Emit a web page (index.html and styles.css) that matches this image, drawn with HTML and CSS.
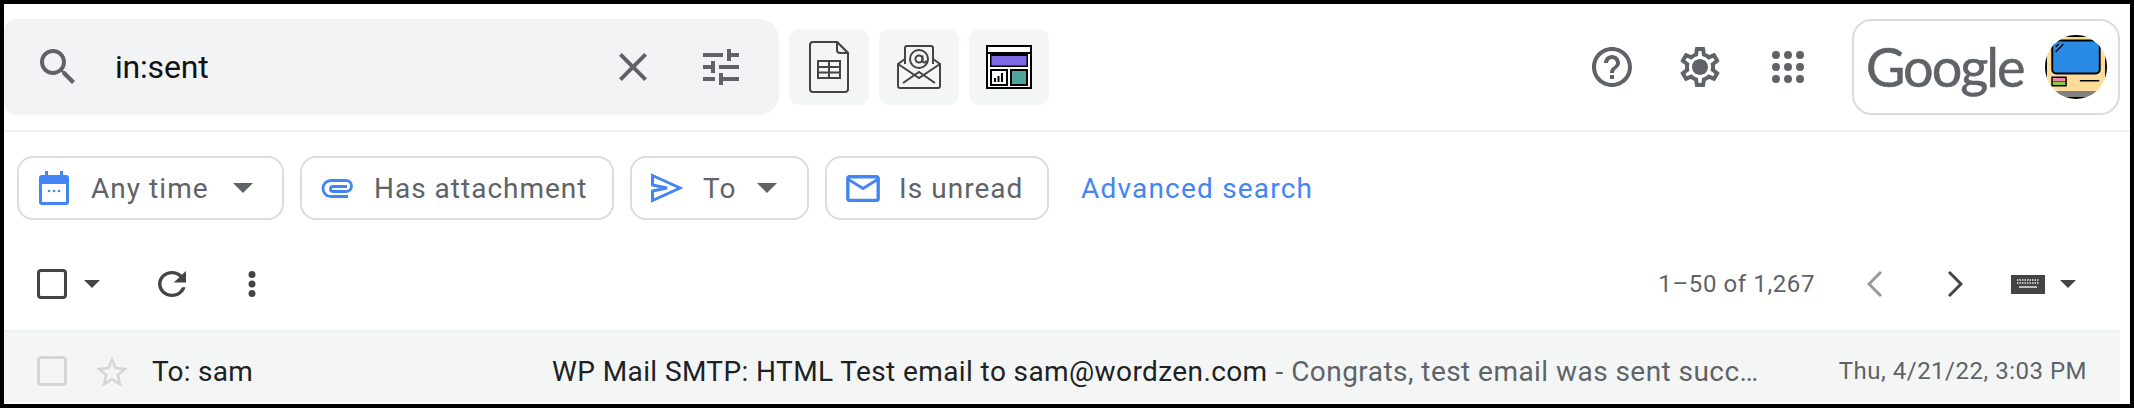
FILE: index.html
```html
<!DOCTYPE html>
<html lang="en">
<head>
<meta charset="utf-8">
<title>Gmail sent</title>
<link rel="stylesheet" href="styles.css">
</head>
<body>
<div class="frame">
  <header class="top">
    <div class="search">
      <svg class="ic48" viewBox="0 0 24 24"><path d="M15.5 14h-.79l-.28-.27C15.41 12.59 16 11.11 16 9.5 16 5.91 13.09 3 9.5 3S3 5.91 3 9.5 5.91 16 9.5 16c1.61 0 3.09-.59 4.23-1.57l.27.28v.79l5 4.99L20.49 19l-4.99-5zm-6 0C7.01 14 5 11.99 5 9.5S7.01 5 9.5 5 14 7.01 14 9.5 11.99 14 9.5 14z"/></svg>
      <span class="query">in:sent</span>
      <svg class="ic48" viewBox="0 0 24 24"><path d="M19 6.41L17.59 5 12 10.59 6.41 5 5 6.41 10.59 12 5 17.59 6.41 19 12 13.41 17.59 19 19 17.59 13.41 12z"/></svg>
      <svg class="ic48 tune" viewBox="0 0 24 24"><path d="M3 17v2h6v-2H3zM3 5v2h10V5H3zm10 16v-2h8v-2h-8v-2h-2v6h2zM7 9v2H3v2h4v2h2V9H7zm14 4v-2H11v2h10zm-6-4h2V7h4V5h-4V3h-2v6z"/></svg>
    </div>
    <div class="exts">
      <div class="ext">
        <svg class="sheet" viewBox="0 0 40 52"><path class="ln" d="M4 1h24l11 11v36a3 3 0 0 1-3 3H4a3 3 0 0 1-3-3V4a3 3 0 0 1 3-3z"/><path class="ln fold" d="M28 1v8a3 3 0 0 0 3 3h8z"/><path class="ln" d="M9 20h22v17H9zM9 26h22M9 31.500h22M20 20v17"/></svg>
      </div>
      <div class="ext">
        <svg class="openmail" viewBox="0 0 44 44"><path class="ln" d="M8 19V3a2 2 0 0 1 2-2h24a2 2 0 0 1 2 2v16"/><path class="ln" d="M8 14l-7 5v22a2 2 0 0 0 2 2h38a2 2 0 0 0 2-2V19l-7-5"/><path class="ln" d="M1 19l21 14 21-14M6 38l16-11 16 11"/><circle class="ln" cx="22" cy="14" r="9"/><circle class="ln" cx="22" cy="14" r="3.500"/><path class="ln" d="M25.500 10.500v5a2 2 0 0 0 4 0"/></svg>
      </div>
      <div class="ext">
        <svg class="report" viewBox="0 0 46 44"><rect width="46" height="44" fill="#000"/><rect x="2" y="2" width="42" height="5" fill="#fff"/><rect x="2" y="9" width="42" height="33" fill="#fff"/><rect x="4" y="9" width="38" height="13" fill="#000"/><rect x="5.500" y="11" width="35" height="9.500" fill="#7e69e4"/><rect x="4" y="24" width="18" height="17" fill="#000"/><rect x="6" y="26" width="14" height="13" fill="#fff"/><path d="M8 33h2v4H8zM11.500 31h2v6h-2zM15 28h2v9h-2z" fill="#000"/><rect x="24" y="24" width="18" height="17" fill="#000"/><rect x="26" y="26" width="14" height="13" fill="#4fa59c"/></svg>
      </div>
    </div>
    <div class="actions">
      <svg class="ic48" viewBox="0 0 24 24"><path d="M11 18h2v-2h-2v2zm1-16C6.480 2 2 6.480 2 12s4.480 10 10 10 10-4.480 10-10S17.520 2 12 2zm0 18c-4.410 0-8-3.590-8-8s3.590-8 8-8 8 3.590 8 8-3.590 8-8 8zm0-14c-2.210 0-4 1.790-4 4h2c0-1.100.9-2 2-2s2 .9 2 2c0 2-3 1.750-3 5h2c0-2.250 3-2.500 3-5 0-2.210-1.790-4-4-4z"/></svg>
      <svg class="ic48" viewBox="0 0 24 24"><path d="M19.430 12.980c.04-.32.07-.64.07-.98 0-.34-.03-.66-.07-.98l2.110-1.650c.19-.15.24-.42.12-.64l-2-3.460c-.09-.16-.26-.25-.44-.25-.06 0-.12.01-.17.03l-2.490 1c-.52-.4-1.080-.73-1.690-.98l-.38-2.650C14.460 2.180 14.250 2 14 2h-4c-.25 0-.46.18-.49.42l-.38 2.650c-.61.25-1.170.59-1.690.98l-2.490-1c-.06-.02-.12-.03-.18-.03-.17 0-.34.09-.43.25l-2 3.460c-.13.22-.07.49.12.64l2.110 1.650c-.04.32-.07.65-.07.98 0 .33.03.66.07.98l-2.110 1.650c-.19.15-.24.42-.12.64l2 3.460c.09.16.26.25.44.25.06 0 .12-.01.17-.03l2.490-1c.52.4 1.080.73 1.690.98l.38 2.650c.03.24.24.42.49.42h4c.25 0 .46-.18.49-.42l.38-2.650c.61-.25 1.170-.59 1.690-.98l2.490 1c.06.02.12.03.18.03.17 0 .34-.09.43-.25l2-3.460c.12-.22.07-.49-.12-.64l-2.110-1.650zm-1.980-1.710c.04.31.05.52.05.73 0 .21-.02.43-.05.73l-.14 1.130.89.7 1.080.84-.7 1.210-1.270-.51-1.040-.42-.9.68c-.43.32-.84.56-1.250.73l-1.060.43-.16 1.130-.2 1.350h-1.400l-.19-1.350-.16-1.130-1.060-.43c-.43-.18-.83-.41-1.230-.71l-.91-.7-1.060.43-1.270.51-.7-1.210 1.080-.84.89-.7-.14-1.130c-.03-.31-.05-.54-.05-.74s.02-.43.05-.73l.14-1.130-.89-.7-1.080-.84.7-1.210 1.270.51 1.040.42.9-.68c.43-.32.84-.56 1.250-.73l1.060-.43.16-1.130.2-1.350h1.390l.19 1.350.16 1.130 1.060.43c.43.18.83.41 1.230.71l.91.7 1.060-.43 1.270-.51.7 1.210-1.070.85-.89.7.14 1.130zM12 8c-2.210 0-4 1.790-4 4s1.790 4 4 4 4-1.790 4-4-1.790-4-4-4z"/></svg>
      <svg class="ic48" viewBox="0 0 24 24"><circle cx="6" cy="6" r="2"/><circle cx="12" cy="6" r="2"/><circle cx="18" cy="6" r="2"/><circle cx="6" cy="12" r="2"/><circle cx="12" cy="12" r="2"/><circle cx="18" cy="12" r="2"/><circle cx="6" cy="18" r="2"/><circle cx="12" cy="18" r="2"/><circle cx="18" cy="18" r="2"/></svg>
      <div class="account">
        <span class="wordmark">Google</span>
        <svg class="avatar" viewBox="0 0 64 64" preserveAspectRatio="none">
          <defs><clipPath id="round"><circle cx="32" cy="32" r="32"/></clipPath></defs>
          <g clip-path="url(#round)">
            <rect width="64" height="64" fill="#fcdc98"/>
            <rect width="64" height="2" fill="#000"/>
            <rect width="2" height="64" fill="#000"/>
            <rect x="62" width="2" height="64" fill="#000"/>
            <rect x="7.500" y="5.500" width="49" height="33" rx="4" fill="#2a8be4" stroke="#000" stroke-width="2"/>
            <path d="M11 17l8-8M11 12l3-3" stroke="#000" stroke-width="1.500"/>
            <rect x="6.500" y="41.500" width="16" height="10" fill="#000"/>
            <rect x="8" y="43" width="13" height="3.500" fill="#f186a8"/>
            <rect x="8" y="47" width="13" height="3" fill="#84d03c"/>
            <rect x="36" y="45" width="20" height="1.500" fill="#000"/>
            <rect y="56" width="64" height="6" fill="#808080"/>
            <rect y="62" width="64" height="2" fill="#000"/>
          </g>
        </svg>
      </div>
    </div>
  </header>

  <nav class="chips">
    <div class="chip">
      <svg class="cal" viewBox="0 0 30 34"><path fill-rule="evenodd" d="M6 0h3v4h12V0h3v4h3a3 3 0 0 1 3 3v24a3 3 0 0 1-3 3H3a3 3 0 0 1-3-3V7a3 3 0 0 1 3-3h3zM3 13v18h24V13z"/><circle cx="10" cy="20" r="1.300"/><circle cx="15" cy="20" r="1.300"/><circle cx="20" cy="20" r="1.300"/></svg>
      <span class="label l-any">Any time</span>
      <svg class="drop" viewBox="0 0 20 10"><path d="M0 0h20L10 10z"/></svg>
    </div>
    <div class="chip">
      <svg class="clip" viewBox="0 0 34 19"><path d="M27 17.500H10a8 8 0 0 1 0-16h15a5.500 5.500 0 0 1 0 11H12a2.500 2.500 0 0 1 0-5h14"/></svg>
      <span class="label l-has">Has attachment</span>
    </div>
    <div class="chip">
      <svg class="send" viewBox="0 0 32 30"><path d="M1.500 2.500L29 15 1.500 27.500v-9.500L16 15 1.500 12z"/></svg>
      <span class="label l-to">To</span>
      <svg class="drop" viewBox="0 0 20 10"><path d="M0 0h20L10 10z"/></svg>
    </div>
    <div class="chip">
      <svg class="mail" viewBox="2 4 20 16"><path d="M20 4H4c-1.100 0-1.990.9-1.990 2L2 18c0 1.100.9 2 2 2h16c1.100 0 2-.9 2-2V6c0-1.100-.9-2-2-2zm0 14H4V8l8 5 8-5v10zm-8-7L4 6h16l-8 5z"/></svg>
      <span class="label l-unread">Is unread</span>
    </div>
    <a class="advanced">Advanced search</a>
  </nav>

  <div class="tools">
    <span class="check"></span>
    <svg class="tcaret" viewBox="0 0 16 8"><path d="M0 0h16L8 8z"/></svg>
    <svg class="refresh" viewBox="4 4 16 16" preserveAspectRatio="none"><path d="M17.650 6.350C16.200 4.900 14.210 4 12 4c-4.420 0-7.990 3.580-7.990 8s3.570 8 7.990 8c3.730 0 6.840-2.550 7.730-6h-2.080c-.82 2.330-3.040 4-5.650 4-3.310 0-6-2.690-6-6s2.690-6 6-6c1.660 0 3.140.69 4.220 1.780L13 11h7V4l-2.350 2.350z"/></svg>
    <svg class="more" viewBox="0 0 8 26"><circle cx="4" cy="3.500" r="3.500"/><circle cx="4" cy="13" r="3.500"/><circle cx="4" cy="22.500" r="3.500"/></svg>
    <span class="count">1–50 of 1,267</span>
    <svg class="chev prev" viewBox="0 0 15 26"><path d="M14 1L2 13l12 12"/></svg>
    <svg class="chev next" viewBox="0 0 15 26"><path d="M1 1l12 12L1 25"/></svg>
    <svg class="kbd" viewBox="0 0 34 19"><rect width="34" height="19" fill="#444"/><path d="M6 5h22M6 8h22" stroke="#e8e8e8" stroke-width="1.500" stroke-dasharray="1.500 1"/><path d="M8 12h18" stroke="#e8e8e8" stroke-width="1.500"/></svg>
    <svg class="tcaret kcaret" viewBox="0 0 16 8"><path d="M0 0h16L8 8z"/></svg>
  </div>

  <div class="row">
    <span class="check faint"></span>
    <svg class="star" viewBox="2 2 20 19"><path d="M22 9.240l-7.190-.62L12 2 9.190 8.630 2 9.240l5.460 4.730L5.820 21 12 17.270 18.180 21l-1.630-7.030L22 9.240zM12 15.400l-3.760 2.270 1-4.280-3.320-2.880 4.380-.38L12 6.100l1.710 4.040 4.380.38-3.320 2.880 1 4.280L12 15.400z"/></svg>
    <span class="sender">To: sam</span>
    <span class="subject">WP Mail SMTP: HTML Test email to sam@wordzen.com</span>
    <span class="snippet">- Congrats, test email was sent succ…</span>
    <span class="date">Thu, 4/21/22, 3:03 PM</span>
  </div>
</div>
</body>
</html>
```
FILE: styles.css
```css
* { box-sizing: border-box; }
html, body { margin: 0; padding: 0; }
body { width: 2134px; height: 408px; background: #000; font-family: Roboto, "Liberation Sans", sans-serif; overflow: hidden; }
svg { display: block; flex: none; }

.frame { width: 2134px; height: 408px; border: 4px solid #000; background: #fff; display: flex; flex-direction: column; }

.top { height: 128px; padding-top: 16px; padding-bottom: 16px; border-bottom: 2px solid #eef1f4; display: flex; align-items: center; }
.ic48 { width: 48px; height: 48px; fill: #5f6368; }

.search { width: 775px; height: 96px; background: #f1f3f4; border-radius: 12px 20px 20px 12px; display: flex; align-items: center; padding-left: 30px; padding-right: 34px; }
.query { flex: 1; margin-left: 33px; font-size: 32px; color: #111; letter-spacing: -0.2px; }
.tune { margin-left: 40px; }

.exts { display: flex; gap: 10px; margin-left: 10px; }
.ext { width: 80px; height: 76px; background: #f4f5f5; border-radius: 10px; display: flex; align-items: center; justify-content: center; }
.ln { fill: none; stroke: #444; stroke-width: 2; }
.fold { fill: #f4f5f5; }
.sheet { width: 40px; height: 52px; }
.openmail { width: 44px; height: 44px; }
.report { width: 46px; height: 44px; }

.actions { margin-left: auto; margin-right: 10px; display: flex; align-items: center; gap: 40px; }
.account { width: 268px; height: 96px; border: 2px solid #dadce0; border-radius: 20px; display: flex; align-items: center; padding-left: 12px; }
.wordmark { font-family: Lato, sans-serif; font-size: 54px; line-height: 60px; color: #5f6368; letter-spacing: -2px; -webkit-text-stroke: 0.5px #5f6368; width: 179px; }
.avatar { width: 62px; height: 64px; }

.chips { height: 88px; padding-top: 24px; padding-left: 13px; display: flex; gap: 16px; align-items: stretch; }
.chip { height: 64px; border: 2px solid #dadce0; border-radius: 16px; display: flex; align-items: center; }
.chip:nth-child(1) { width: 267px; padding-left: 20px; }
.chip:nth-child(2) { width: 314px; padding-left: 19px; }
.chip:nth-child(3) { width: 179px; padding-left: 19px; }
.chip:nth-child(4) { width: 224px; padding-left: 19px; }
.label { font-size: 28px; color: #5f6368; letter-spacing: 1.05px; }
.cal { width: 30px; height: 34px; fill: #4285f4; margin-right: 22px; }
.clip { width: 34px; height: 19px; fill: none; stroke: #4285f4; stroke-width: 2.8; margin-right: 19px; }
.send { width: 32px; height: 30px; fill: none; stroke: #4285f4; stroke-width: 3; margin-right: 20px; }
.mail { width: 34px; height: 27px; fill: #4285f4; margin-right: 19px; }
.drop { width: 20px; height: 10px; fill: #5f6368; }
.l-any { width: 142px; }
.l-has { letter-spacing: 1px; }
.l-to { width: 54px; }
.advanced { align-self: center; margin-left: 16px; font-size: 28px; color: #4285f4; letter-spacing: 1.2px; }

.tools { height: 110px; padding-top: 18px; padding-left: 33px; padding-right: 55px; display: flex; align-items: center; }
.check { display: block; flex: none; width: 30px; height: 30px; border: 3px solid #444; border-radius: 4px; }
.check.faint { border-color: #d5d6d6; }
.tcaret { width: 16px; height: 8px; fill: #444; margin-left: 17px; }
.refresh { width: 28px; height: 26px; fill: #444; margin-left: 58px; }
.more { width: 8px; height: 26px; fill: #444; margin-left: 62px; }
.count { margin-left: auto; font-size: 24px; color: #5f6368; letter-spacing: 0.6px; }
.chev { width: 15px; height: 26px; fill: none; stroke-width: 3; }
.prev { stroke: #999; margin-left: 52px; }
.next { stroke: #444; margin-left: 66px; }
.kbd { width: 34px; height: 19px; margin-left: 48px; }
.kcaret { margin-left: 15px; margin-right: -1px; }

.row { height: 72px; margin-right: 10px; border-top: 2px solid #eef0f4; background: #f4f6f6; display: flex; align-items: center; padding-top: 8px; padding-left: 33px; padding-right: 33px; font-size: 28px; }
.star { width: 32px; height: 31px; fill: #d5d6d6; margin-left: 29px; }
.sender { width: 400px; margin-left: 24px; color: #202124; letter-spacing: 0.25px; }
.subject { color: #202124; letter-spacing: 0.4px; }
.snippet { margin-left: 8px; color: #5f6368; letter-spacing: 0.45px; }
.date { margin-left: auto; font-size: 24px; color: #5f6368; letter-spacing: 0.5px; }
```
